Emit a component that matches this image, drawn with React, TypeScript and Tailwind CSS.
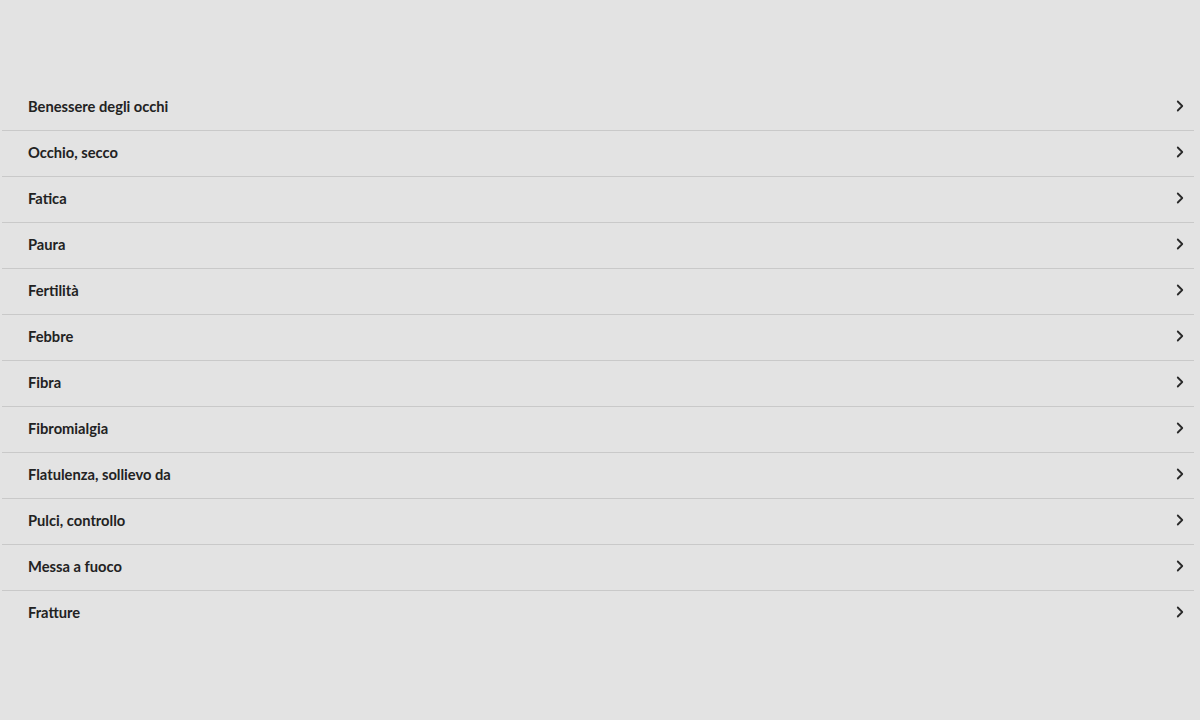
import { ChevronRight } from 'lucide-react';

const items = [
  'Benessere degli occhi',
  'Occhio, secco',
  'Fatica',
  'Paura',
  'Fertilità',
  'Febbre',
  'Fibra',
  'Fibromialgia',
  'Flatulenza, sollievo da',
  'Pulci, controllo',
  'Messa a fuoco',
  'Fratture',
];

export default function App() {
  return (
    <div className="min-h-[720px] bg-[#e3e3e3] pt-[85px] font-['Lato',sans-serif]">
      <ul className="ml-[2px] mr-[6px]">
        {items.map((item, i) => (
          <li
            key={item}
            className={
              'flex h-[46px] items-center justify-between border-b pb-[3px] pl-[26px] pr-[5px] ' +
              (i < items.length - 1 ? 'border-[#c9c9c9]' : 'border-transparent')
            }
          >
            <span className="text-[14.7px] font-bold text-[#222]">{item}</span>
            <ChevronRight size={18} strokeWidth={2.4} className="text-[#2a2a2a]" />
          </li>
        ))}
      </ul>
    </div>
  );
}
